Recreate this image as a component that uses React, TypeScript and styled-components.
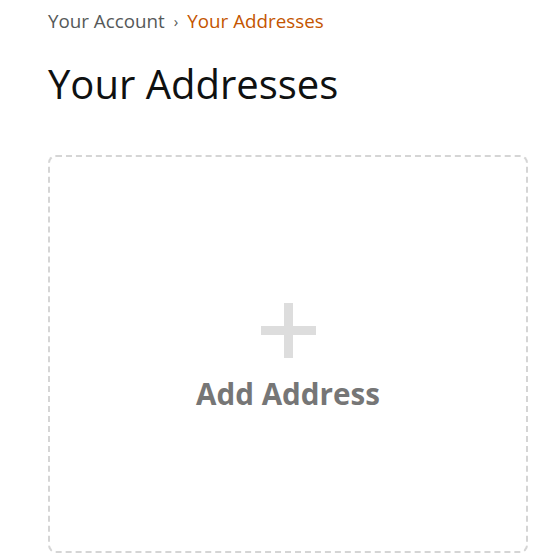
import React from "react";
import styled, { createGlobalStyle } from "styled-components";

const Global = createGlobalStyle`
  html, body { margin: 0; padding: 0; background: #fff; }
  body { font-family: "Open Sans", "Noto Sans", sans-serif; }
`;

const Page = styled.div`
  padding: 9px 0 0 48px;
  display: flex;
  flex-direction: column;
`;

const Breadcrumb = styled.nav`
  display: flex;
  align-items: center;
  gap: 9px;
  font-size: 18.8px;
  line-height: 24px;
  color: #565959;
`;

const Crumb = styled.span<{ $active?: boolean }>`
  color: ${(p) => (p.$active ? "#c45500" : "#565959")};
`;

const Sep = styled.span`
  font-size: 15px;
  color: #565959;
`;

const Title = styled.h1`
  margin: 25px 0 0;
  font-size: 40px;
  font-weight: 400;
  line-height: 52px;
  color: #0f1111;
`;

const AddCard = styled.button`
  margin-top: 45px;
  width: 480px;
  height: 398px;
  box-sizing: border-box;
  border: 2px dashed #d5d5d5;
  border-radius: 8px;
  background: #fff;
  display: flex;
  flex-direction: column;
  align-items: center;
  justify-content: center;
  gap: 18px;
  padding: 7px 0 0;
  cursor: pointer;
  font-family: inherit;
`;

const PlusIcon = styled.svg`
  width: 55px;
  height: 55px;
  display: block;
`;

const AddLabel = styled.span`
  font-size: 29.6px;
  font-weight: 700;
  color: #767676;
  line-height: 36px;
`;

export default function App() {
  return (
    <>
      <Global />
      <Page>
        <Breadcrumb>
          <Crumb>Your Account</Crumb>
          <Sep>›</Sep>
          <Crumb $active>Your Addresses</Crumb>
        </Breadcrumb>
        <Title>Your Addresses</Title>
        <AddCard>
          <PlusIcon viewBox="0 0 55 55">
            <rect x="23" y="0" width="9" height="55" fill="#dddddd" />
            <rect x="0" y="23" width="55" height="9" fill="#dddddd" />
          </PlusIcon>
          <AddLabel>Add Address</AddLabel>
        </AddCard>
      </Page>
    </>
  );
}
